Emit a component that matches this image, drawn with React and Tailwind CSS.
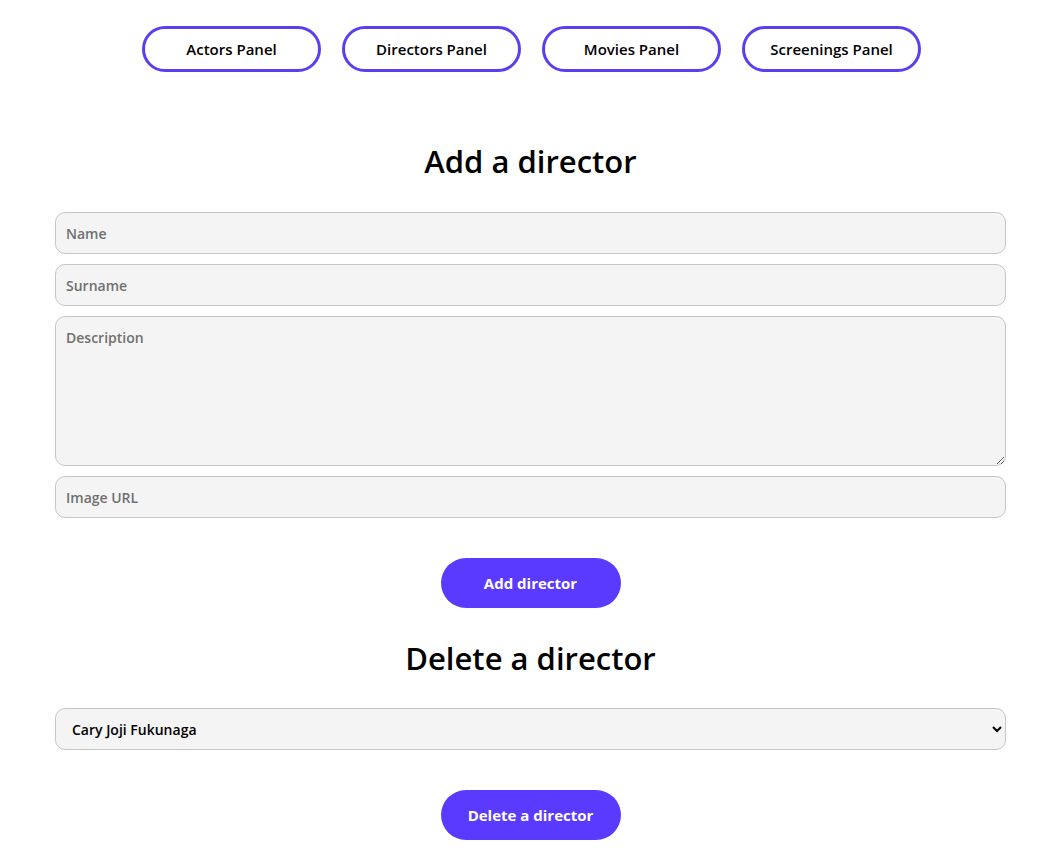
import React, { useState } from "react";

const panels = ["Actors Panel", "Directors Panel", "Movies Panel", "Screenings Panel"];
const directors = ["Cary Joji Fukunaga", "Christopher Nolan", "Denis Villeneuve"];

const field =
  "w-full bg-[#f4f4f4] border border-[#c6c6c6] rounded-[10px] px-[10px] text-[14px] font-semibold text-black placeholder:text-[#707070] outline-none";

export default function App() {
  const [form, setForm] = useState({ name: "", surname: "", description: "", image: "" });
  const [selected, setSelected] = useState(directors[0]);

  const onChange = (e) => setForm((f) => ({ ...f, [e.target.name]: e.target.value }));

  return (
    <div className="min-h-screen bg-white font-['Open_Sans',sans-serif] text-black">
      <nav className="flex justify-center gap-[21px] pt-[26px]">
        {panels.map((p) => (
          <button
            key={p}
            className="w-[179px] h-[46px] rounded-full border-[3px] border-[#5b3ef2] text-[15px] font-semibold"
          >
            {p}
          </button>
        ))}
      </nav>

      <div className="pl-[55px] pr-[57px]">
        <h1 className="text-center text-[31px] font-semibold mt-[69px] mb-[31px] leading-[40px]">
          Add a director
        </h1>

        <form className="flex flex-col gap-[10px]" onSubmit={(e) => e.preventDefault()}>
          <input name="name" placeholder="Name" value={form.name} onChange={onChange} className={`${field} h-[42px]`} />
          <input name="surname" placeholder="Surname" value={form.surname} onChange={onChange} className={`${field} h-[42px]`} />
          <textarea
            name="description"
            placeholder="Description"
            value={form.description}
            onChange={onChange}
            className={`${field} h-[150px] pt-[10px]`}
          />
          <input name="image" placeholder="Image URL" value={form.image} onChange={onChange} className={`${field} h-[42px]`} />
          <div className="flex justify-center mt-[30px]">
            <button
              type="submit"
              className="w-[180px] h-[50px] rounded-full bg-[#5a3aff] text-white text-[15px] font-bold"
            >
              Add director
            </button>
          </div>
        </form>

        <h2 className="text-center text-[31px] font-semibold mt-[30px] mb-[30px] leading-[40px]">
          Delete a director
        </h2>

        <select
          value={selected}
          onChange={(e) => setSelected(e.target.value)}
          className="w-full h-[42px] bg-[#f4f4f4] border border-[#c6c6c6] rounded-[10px] pl-[12px] pr-[6px] text-[14px] font-semibold text-black outline-none"
        >
          {directors.map((d) => (
            <option key={d} value={d}>
              {d}
            </option>
          ))}
        </select>

        <div className="flex justify-center mt-[40px]">
          <button className="w-[180px] h-[50px] rounded-full bg-[#5a3aff] text-white text-[15px] font-bold">
            Delete a director
          </button>
        </div>
      </div>
    </div>
  );
}
